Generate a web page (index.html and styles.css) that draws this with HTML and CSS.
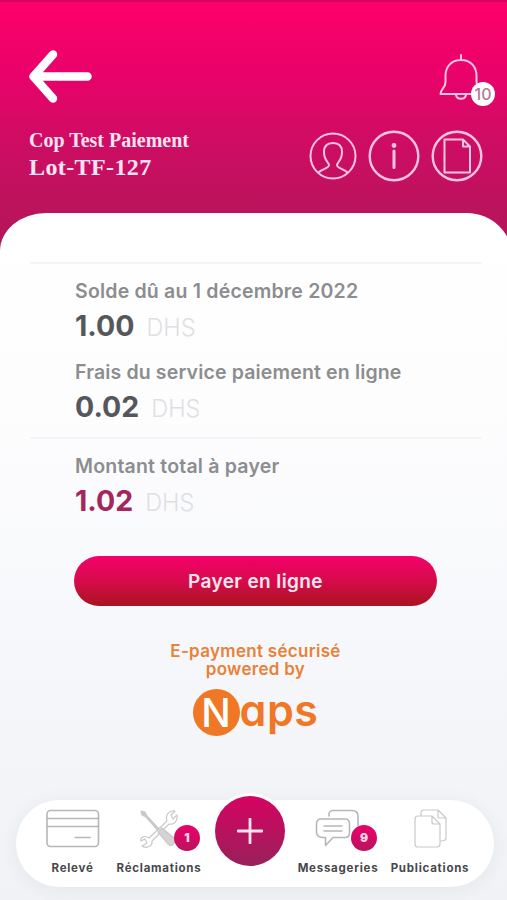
FILE: index.html
```html
<!DOCTYPE html>
<html lang="fr">
<head>
  <meta charset="UTF-8" />
  <meta name="viewport" content="width=device-width, initial-scale=1.0"/>
  <title>Paiement en ligne</title>
  <link rel="stylesheet" href="styles.css">
</head>
<body>

  <div class="app">
    <header>
      <div class="top-bar">
        <a href="#" class="back">
          <svg width="66" height="56" viewBox="0 0 66 56"><path d="M26 5.500L6.500 27.500L26 49.500M6.500 27.500H60.500" /></svg>
        </a>
        <a href="#" class="bell">
          <svg width="44" height="50" viewBox="0 0 44 50"><path d="M22 1V6M22 6C12 6 6.500 13 6.500 22V28C6.500 34 1.500 35 1.500 40H42C42 35 37.500 34 37.500 28V22C37.500 13 32 6 22 6ZM17 41C18 46 26 46 27 41" /></svg>
          <span class="bell-count">10</span>
        </a>
      </div>
      <div class="account">
        <div class="account-name">
          <p class="cop">Cop Test Paiement</p>
          <p class="lot">Lot-TF-127</p>
        </div>
        <nav class="shortcuts">
          <a href="#"><svg width="48" height="52" viewBox="0 0 48 52"><circle cx="24" cy="26" r="22.500" /><path d="M9.500 42.500C13 39 20 38.500 20 35C20 32 15 31 15 22C15 16 18 13 24 13S33 16 33 22C33 31 28 32 28 35C28 38.500 35 39 38.500 42.500" /></svg></a>
          <a href="#"><svg width="52" height="52" viewBox="0 0 52 52"><circle class="ring" cx="26" cy="26" r="24.300" /><path class="info" d="M26 21V37.500" /><circle class="dot" cx="26" cy="15.500" r="2.400" /></svg></a>
          <a href="#"><svg width="52" height="52" viewBox="0 0 52 52"><circle class="ring" cx="26" cy="26" r="24.300" /><path d="M13.500 9.500H32L39 16.500V42.500H13.500ZM32 9.500V16.500H39" /></svg></a>
        </nav>
      </div>
    </header>

    <main>
      <section class="details">
        <div class="item">
          <p class="label due">Solde dû au 1 décembre 2022</p>
          <p class="amount"><strong>1.00</strong><span>DHS</span></p>
        </div>
        <div class="item">
          <p class="label fee">Frais du service paiement en ligne</p>
          <p class="amount"><strong>0.02</strong><span>DHS</span></p>
        </div>
      </section>
      <section class="total">
        <p class="label">Montant total à payer</p>
        <p class="amount"><strong>1.02</strong><span>DHS</span></p>
      </section>

      <button class="pay">Payer en ligne</button>

      <div class="secure">
        <p class="secure-text">E-payment sécurisé</p>
        <p class="secure-text">powered by</p>
        <div class="naps"><span class="naps-n">N</span><span class="naps-rest">aps</span></div>
      </div>
    </main>

    <nav class="tab-bar">
      <a href="#" class="tab">
        <svg width="54" height="40" viewBox="0 0 54 40"><rect x="1" y="1.500" width="51.500" height="36" rx="3.500" /><path d="M1 9.500H52.500M1 17.500H52.500M29 28.500H44" /></svg>
        <span>Relevé</span>
      </a>
      <a href="#" class="tab reclamations">
        <svg class="thin" width="40" height="40" viewBox="0 0 40 40">
          <path d="M10 29L28 12C26 6 30 1 36 2L32 6L34 10L38 6C39 12 35 16 30 15L13 32C14 37 7 40 3 37L8 34L6 30L2 32C1 28 6 26 10 29Z" fill="#fff" />
          <path d="M2 2L6 3L8 7L20 20L18.500 21L7 8L3 6Z" fill="#c9c9cb" />
          <path d="M19 23L23 19L35 29C37 33 34 38 30 36Z" fill="#d4d4d6" />
        </svg>
        <span>Réclamations</span>
        <b class="badge">1</b>
      </a>
      <a href="#" class="add">
        <svg width="26" height="26" viewBox="0 0 26 26"><path d="M13 1V25M1 13H25" /></svg>
      </a>
      <a href="#" class="tab messageries">
        <svg width="46" height="40" viewBox="0 0 46 40"><path d="M14 7V5.500C14 3 16 1.500 18 1.500H37C41 1.500 43 3.500 43 7V17M6 10H30C33 10 34.500 12 34.500 15V24C34.500 27 33 28.500 30 28.500H18L10.500 36.500V28.500H7C4 28 1.500 26 1.500 23V15C1.500 12 3 10 6 10ZM9 17H27M9 22H27" /></svg>
        <span>Messageries</span>
        <b class="badge">9</b>
      </a>
      <a href="#" class="tab publications">
        <svg class="thin" width="34" height="40" viewBox="0 0 34 40"><path d="M7 7V4C7 2 8 1 10 1H24L32 9V29C32 31 30 32 27 32M24 1V8C24 9 25 9 26 9H32M4 7H18L26 15V35C26 37 25 38 23 38H4C2 38 1 37 1 35V10C1 8 2 7 4 7ZM18 7V13C18 15 19 15 20 15H26" /></svg>
        <span>Publications</span>
      </a>
    </nav>
  </div>

</body>
</html>
```

FILE: styles.css
```css
* {
  margin: 0;
  padding: 0;
  box-sizing: border-box;
}

body {
  font-family: Inter, "Liberation Sans", sans-serif;
  background: #f0f2f5;
}

a {
  text-decoration: none;
  color: inherit;
}

svg {
  display: block;
  fill: none;
  stroke-linecap: round;
  stroke-linejoin: round;
}

.app {
  display: flex;
  flex-direction: column;
  height: 900px;
  overflow: hidden;
  background: linear-gradient(#fc006b 10px, #e9026a 75px, #cd0d63 145px, #b9145b 220px, #b1185a 250px);
}

header {
  height: 213px;
  padding: 47px 12px 0 27px;
  border-top: 2px solid #d50060;
}

.top-bar {
  display: flex;
  justify-content: space-between;
  height: 81px;
}

.back svg {
  stroke: #fff;
  stroke-width: 8.500;
}

.bell {
  position: relative;
  width: 56px;
  padding-top: 5px;
}

.bell svg,
.shortcuts svg {
  stroke: #ffc4e2;
  stroke-width: 2;
}

.bell-count {
  position: absolute;
  right: 0;
  top: 33px;
  width: 24px;
  height: 24px;
  border-radius: 50%;
  background: #fff;
  color: #b17a96;
  font-size: 16px;
  font-weight: 500;
  line-height: 24px;
  text-align: center;
}

.account {
  display: flex;
  justify-content: space-between;
}

.account-name {
  padding-left: 2px;
  color: #ffe3f1;
  font-family: "Liberation Serif", serif;
  font-weight: bold;
}

.cop {
  font-size: 20px;
  line-height: 20px;
}

.lot {
  font-size: 24px;
  line-height: 34px;
  letter-spacing: 0.400px;
}

.shortcuts {
  display: flex;
  gap: 11px;
  padding-right: 12px;
}

.shortcuts .ring {
  stroke-width: 2.400;
}

.shortcuts .info {
  stroke-width: 3;
}

.shortcuts .dot {
  fill: #ffc4e2;
  stroke: none;
}

main {
  flex: 1;
  margin-right: -6px;
  margin-bottom: -100px;
  padding: 49px 31px 0 30px;
  border-radius: 46px 46px 0 0 / 38px 46px 0 0;
  background: linear-gradient(#fff, #fdfdfe 200px, #f7f8fb 400px, #f0f2f5);
}

.details,
.total {
  padding-left: 45px;
  border-top: 2px solid #f4f5f6;
}

.details {
  height: 175px;
  padding-top: 14px;
}

.item {
  height: 81px;
}

.total {
  height: 119px;
  padding-top: 14px;
}

.label {
  color: #8c8d8f;
  font-size: 19.500px;
  font-weight: 600;
  line-height: 26px;
  letter-spacing: 0.200px;
  white-space: nowrap;
}

.label.fee {
  letter-spacing: 0.150px;
}

.amount {
  display: flex;
  align-items: baseline;
  gap: 12px;
  line-height: 44px;
}

.amount strong {
  color: #56575a;
  font-size: 28.500px;
  font-weight: 700;
}

.amount span {
  color: #dfe0e3;
  font-size: 23.500px;
  font-weight: 300;
}

.total .amount strong {
  color: #a3265d;
}

.pay {
  display: block;
  width: 363px;
  height: 50px;
  margin-left: 44px;
  border: none;
  border-radius: 25px;
  background: linear-gradient(#f4006a, #d60b4c 50%, #a9141f);
  color: #ffe6ee;
  font: 600 19px Inter, sans-serif;
  letter-spacing: 0.400px;
}

.secure {
  display: flex;
  flex-direction: column;
  align-items: center;
  width: 363px;
  margin-left: 44px;
  padding-top: 37px;
  color: #e98138;
}

.secure-text {
  font-size: 17px;
  font-weight: 600;
  line-height: 17.500px;
  letter-spacing: 0.300px;
}

.naps {
  display: flex;
  align-items: center;
  height: 47px;
  margin-top: 11px;
  color: #ef7726;
}

.naps-n {
  width: 47px;
  height: 47px;
  border-radius: 50%;
  background: #ef7726;
  color: #fff;
  font-size: 39px;
  font-weight: 500;
  line-height: 47px;
  text-align: center;
}

.naps-rest {
  margin-top: -5px;
  font-size: 43px;
  font-weight: 600;
  line-height: 47px;
  letter-spacing: 0.500px;
  font-feature-settings: "cv11";
}

.tab-bar {
  position: relative;
  display: flex;
  align-items: flex-start;
  width: 478px;
  height: 87px;
  margin: 0 0 13px 16px;
  padding: 9px 22px 0 28px;
  border-radius: 44px;
  background: #fff;
  box-shadow: 0 2px 18px rgba(60, 80, 100, 0.07);
}

.tab {
  position: relative;
  display: flex;
  flex-direction: column;
  align-items: center;
  width: 57px;
  color: #47484b;
  font-size: 11.500px;
  font-weight: 700;
}

.tab svg {
  stroke: #b7b7b9;
  stroke-width: 1.600;
}

.tab svg.thin {
  stroke: #c9c9cb;
  stroke-width: 1.200;
}

.tab span {
  margin-top: 11px;
  line-height: 16px;
  letter-spacing: 0.750px;
  white-space: nowrap;
}

.reclamations {
  width: 86px;
  margin-left: 15px;
}

.messageries {
  width: 82px;
  margin-left: 12px;
}

.publications {
  width: 80px;
  margin-left: 11px;
}

.badge {
  position: absolute;
  right: 2px;
  top: 16px;
  width: 26px;
  height: 26px;
  border-radius: 50%;
  background: linear-gradient(#ec0069, #b9145e);
  color: #ffd5e7;
  font-size: 12px;
  line-height: 26px;
  text-align: center;
}

.publications svg {
  margin-left: 2px;
}

.add {
  display: flex;
  align-items: center;
  justify-content: center;
  width: 70px;
  height: 70px;
  margin: -13px 0 0 13px;
  border-radius: 50%;
  background: linear-gradient(#d60362, #99205a);
  box-shadow: 0 0 0 3px #fff;
}

.add svg {
  stroke: #ffe1ef;
  stroke-width: 2.800;
}
```
